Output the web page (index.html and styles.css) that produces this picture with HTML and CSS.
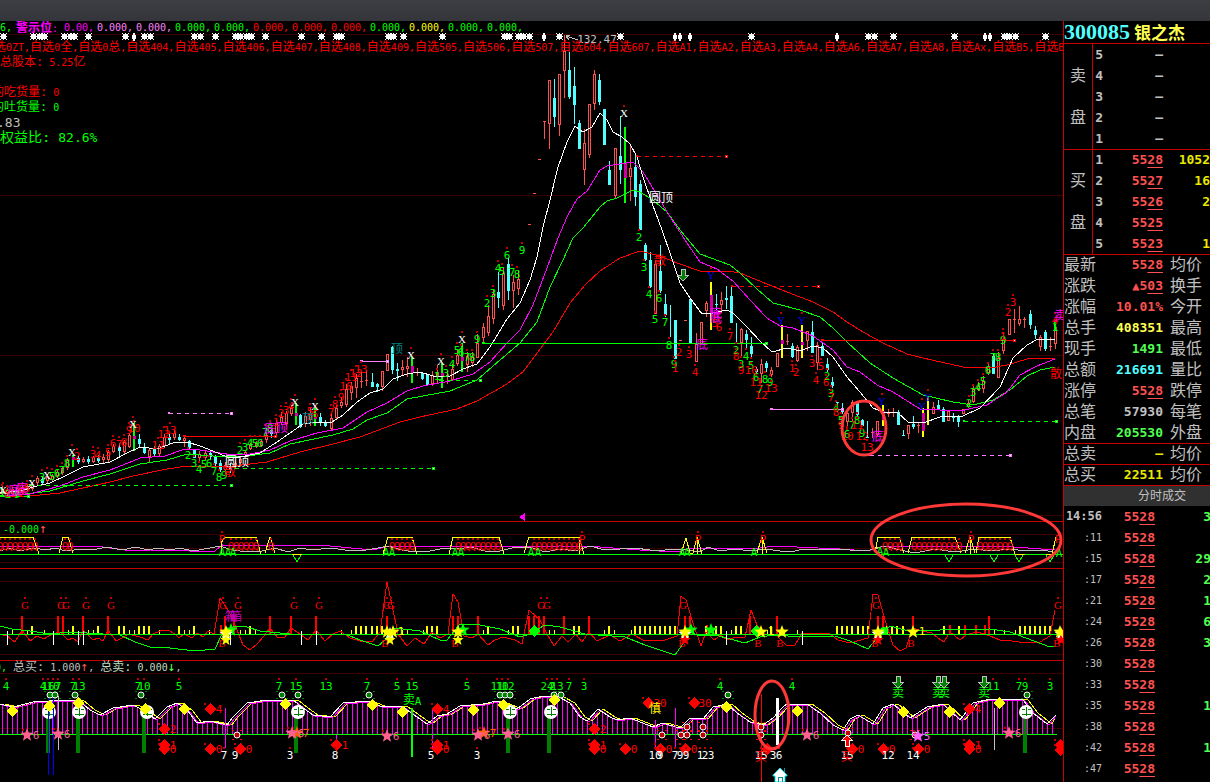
FILE: index.html
```html
<!DOCTYPE html>
<html lang="zh-CN">
<head>
  <meta charset="UTF-8" />
  <meta name="viewport" content="width=device-width, initial-scale=1.0"/>
  <title>300085 银之杰</title>
  <link rel="stylesheet" href="styles.css">
</head>
<body>
  <header class="topbar"></header>

  <main class="terminal">
    <section class="charts">
      <div class="pane">
        <svg id="kline" viewBox="0 21 1063 500"></svg>
        <div class="overlay">
          <p class="values">
            <b class="green lead">46,</b><b class="magenta name"><i>警示位</i>:</b><b class="magenta first">0.00,</b><b class="pink">0.000,</b><b class="pink">0.000,</b><b class="green">0.000,</b><b class="green">0.000,</b><b class="red">0.000,</b><b class="red">0.000,</b><b class="red">0.000,</b><b class="green">0.000,</b><b class="yellow">0.000,</b><b class="green">0.000,</b><b class="green">0.000,</b>
          </p>
          <p class="groups red" id="groups"></p>
          <ul class="facts">
            <li class="red"><i>总股本:</i> 5.25<i>亿</i></li>
            <li></li>
            <li class="red cut"><i>的吃货量:</i> 0</li>
            <li class="green cut"><i>的吐货量:</i> 0</li>
            <li class="gray big">.83</li>
            <li class="green big"><i>权益比:</i> 82.6%</li>
          </ul>
        </div>
      </div>

      <div class="pane">
        <svg id="signal" viewBox="0 521 1063 47"></svg>
        <div class="overlay">
          <p class="caption green">-0.000<span class="up">↑</span></p>
        </div>
      </div>

      <div class="pane">
        <svg id="power" viewBox="0 568 1063 92"></svg>
      </div>

      <div class="pane">
        <svg id="wave" viewBox="0 660 1063 122"></svg>
        <div class="overlay">
          <p class="caption totals gray"><span class="green">0,</span> <i>总买:</i> 1.000<span class="up">↑</span>, <span class="pale"><i>总卖:</i> 0.000</span><span class="down">↓</span>,</p>
        </div>
      </div>

      <svg class="notes" viewBox="0 21 1063 761">
        <ellipse cx="864" cy="428" rx="22" ry="27"/>
        <ellipse cx="966" cy="540" rx="95" ry="36"/>
        <ellipse cx="772" cy="715" rx="17" ry="34"/>
      </svg>
    </section>

    <aside class="quote">
      <h1><span class="code">300085</span><span class="stock">银之杰</span></h1>

      <div class="book">
        <div class="side"><span>卖</span><span>盘</span></div>
        <table>
          <tr><th>5</th><td class="gray">—</td><td></td></tr>
          <tr><th>4</th><td class="gray">—</td><td></td></tr>
          <tr><th>3</th><td class="gray">—</td><td></td></tr>
          <tr><th>2</th><td class="gray">—</td><td></td></tr>
          <tr><th>1</th><td class="gray">—</td><td></td></tr>
        </table>
      </div>
      <div class="book">
        <div class="side"><span>买</span><span>盘</span></div>
        <table>
          <tr><th>1</th><td class="rise">55<u>28</u></td><td class="gold">1052</td></tr>
          <tr><th>2</th><td class="rise">55<u>27</u></td><td class="gold">16</td></tr>
          <tr><th>3</th><td class="rise">55<u>26</u></td><td class="gold">2</td></tr>
          <tr><th>4</th><td class="rise">55<u>25</u></td><td class="gold"></td></tr>
          <tr><th>5</th><td class="rise">55<u>23</u></td><td class="gold">1</td></tr>
        </table>
      </div>

      <table class="info">
        <tr><th>最新</th><td class="rise">55<u>28</u></td><th>均价</th></tr>
        <tr><th>涨跌</th><td class="rise"><span class="tri">▲</span>5<u>03</u></td><th>换手</th></tr>
        <tr><th>涨幅</th><td class="rise">10.01%</td><th>今开</th></tr>
        <tr><th>总手</th><td class="lemon">408351</td><th>最高</th></tr>
        <tr><th>现手</th><td class="fall">1491</td><th>最低</th></tr>
        <tr><th>总额</th><td class="cyan">216691</td><th>量比</th></tr>
        <tr><th>涨停</th><td class="rise">55<u>28</u></td><th>跌停</th></tr>
        <tr><th>总笔</th><td class="gray">57930</td><th>每笔</th></tr>
        <tr><th>内盘</th><td class="fall">205530</td><th>外盘</th></tr>
        <tr class="ruled"><th>总卖</th><td class="gold">—</td><th>均价</th></tr>
        <tr class="ruled"><th>总买</th><td class="gold">22511</td><th>均价</th></tr>
      </table>

      <h2>分时成交</h2>
      <table class="ticks" id="ticks"></table>
    </aside>
  </main>

  <script src="chart.js"></script>
</body>
</html>
```
FILE: styles.css
```css
* { margin: 0; padding: 0; box-sizing: border-box; }
body {
  background: #000;
  color: #c0c0c0;
  font-family: "DejaVu Sans Mono", "Noto Sans CJK SC", monospace;
  overflow: hidden;
}
.topbar {
  height: 21px;
  background: linear-gradient(#3e3f43, #34353a);
}
.terminal { display: flex; }

/* colours */
.red { color: #f00; fill: #f00; }
.green { color: #0f0; fill: #0f0; }
.magenta { color: #f0f; fill: #f0f; }
.pink { color: #ff80ff; fill: #ff80ff; }
.yellow { color: #ff0; fill: #ff0; }
.gray { color: #c0c0c0; fill: #c0c0c0; }
.white { fill: #fff; }
.blue { fill: #00f; }
.teal { fill: #008080; }
.purple { fill: #c000c0; }
.orange { fill: #ff6000; }
.rose { fill: #ff6090; }
.violet { fill: #ff60ff; }
.pale { color: #c0dcc0; }
.rise { color: #ff5050; }
.fall { color: #50ff50; }
.gold { color: #e8e800; }
.lemon { color: #ffff50; }
.cyan { color: #50ffff; }

/* charts */
.charts {
  position: relative;
  flex: 1;
  min-width: 0;
  overflow: hidden;
}
.pane { display: grid; grid-template-columns: minmax(0, 1fr); }
.pane > * { grid-area: 1 / 1; }
.charts svg { display: block; width: 100%; }
.pane svg { shape-rendering: crispEdges; overflow: hidden; }
.pane svg circle, .pane svg .soft { shape-rendering: auto; }
.pane svg text {
  font-family: "DejaVu Sans Mono", "Noto Sans CJK SC", monospace;
  font-size: 11px;
  text-anchor: middle;
}
.pane svg text.cjk { font-size: 12px; }
.pane svg text.serif { font-family: "Liberation Serif", serif; font-size: 11px; }
.notes {
  position: absolute;
  top: 0;
  left: 0;
  pointer-events: none;
  fill: none;
  stroke: #ff3838;
  stroke-width: 3;
}
.overlay {
  font-size: 10px;
  line-height: 12px;
  white-space: nowrap;
  overflow: hidden;
}
.overlay i { font-style: normal; font-size: 12px; }
.overlay b { font-weight: normal; }
.values { display: flex; margin-left: -6px; padding-top: 1px; height: 20px; }
.values b { flex: none; width: 39px; }
.values .lead { width: 22px; }
.values .name { width: 48px; }
.values .name i { font-weight: bold; }
.values .first { width: 33px; }
.groups { height: 14px; margin-left: -18px; }
.facts { list-style: none; }
.facts li { height: 15px; line-height: 15px; }
.facts .cut { margin-left: -8px; }
.facts .big { font-size: 13px; }
.facts .big i { font-size: 14px; }
.facts .gray { margin-left: -3px; }
.caption { padding: 2px 3px; }
.totals { padding: 1px 0; margin-left: -5px; }
.up, .down { font-size: 13px; line-height: 12px; }
.up { color: #ff5050; }
.down { color: #50ff50; }

.ln { fill: none; stroke-width: 1; }
.ln.red { stroke: #f00; fill: none; }
.ln.green { stroke: #0f0; fill: none; }
.ln.magenta { stroke: #f0f; fill: none; }
.ln.yellow { stroke: #ff0; fill: none; }
.ln.white { stroke: #fff; fill: none; }
.ln.gray { stroke: #c0c0c0; fill: none; }
.ln.pink { stroke: #ff80ff; fill: none; }
.dash { stroke-dasharray: 4 4; }
.grid { fill: #3c0000; }
.rule { fill: #c80000; }
.dot { fill: #c00000; }
.up-wick { fill: #ff5050; }
.dn { fill: #50ffff; }
.mid { fill: #d000a0; }
.pillar { fill: #008000; }

/* quote panel */
.quote {
  flex: none;
  width: 147px;
  overflow: hidden;
  border-left: 1px solid #c80000;
  font-size: 13px;
}
.quote h1 {
  display: flex;
  align-items: center;
  gap: 4px;
  height: 23px;
  border-bottom: 1px solid #c80000;
}
.code {
  font: bold 22px/22px "Liberation Serif", serif;
  color: #50ffff;
}
.stock {
  font: bold 17px/22px "Noto Sans CJK SC", sans-serif;
  color: #ffff50;
}
.quote table {
  border-collapse: collapse;
  table-layout: fixed;
  width: 147px;
}
.quote tr { height: 21px; }
.quote td, .quote th { line-height: 19px; white-space: nowrap; }
.quote td { text-align: right; font-weight: bold; }
.quote u { text-underline-offset: 3px; text-decoration-thickness: 1px; }
.book {
  display: flex;
  margin-bottom: -1px;
  border-bottom: 1px solid #c80000;
}
.side {
  display: flex;
  flex-direction: column;
  flex: none;
  justify-content: center;
  gap: 21px;
  width: 29px;
  border-right: 1px solid #c80000;
  font-size: 16px;
  line-height: 21px;
  text-align: center;
}
.quote .book table { width: 118px; }
.book th { width: 10px; text-align: right; }
.book td:nth-child(2) { width: 60px; }
.info th {
  font-size: 16px;
  font-weight: normal;
  text-align: left;
  width: 32px;
}
.info td { width: 67px; }
.info th:last-child { width: 48px; padding-left: 7px; }
.info .ruled > * { box-shadow: inset 0 1px #c80000; }
.tri { font-size: 12px; }
.quote h2 {
  height: 21px;
  padding-left: 74px;
  border-top: 1px solid #c80000;
  background: #303030;
  font-size: 12px;
  font-weight: normal;
  line-height: 20px;
}
.ticks th { width: 38px; font-size: 10px; font-weight: normal; text-align: right; }
.ticks tr:first-child th { font-size: 12px; font-weight: bold; }
.ticks td { width: 53px; }
.ticks td:last-child { width: 56px; }
```
FILE: chart.js
```js
const NS = "http://www.w3.org/2000/svg";

function el(svg, tag, attrs, text) {
  const node = document.createElementNS(NS, tag);
  for (const k in attrs) node.setAttribute(k, attrs[k]);
  if (text !== undefined) node.textContent = text;
  svg.appendChild(node);
  return node;
}
const box = (s, x, y, w, h, c) => el(s, "rect", { x, y, width: w, height: h, class: c });
const line = (s, pts, c) => el(s, "polyline", { points: pts, class: "ln " + c });
// centred label, with the small mark above it
function label(s, x, y, text, c, dot) {
  if (dot) box(s, x - 1, y - 8, 2, 2, "dot");
  el(s, "text", { x, y: y + 4, class: c }, text);
}
function labels(s, c, dot, data) {
  data.trim().split(/\s+/).forEach(item => {
    const [x, y, t] = item.split(",");
    label(s, +x, +y, t, c, dot);
  });
}
function grid(s, rows) {
  rows.forEach(y => box(s, 0, y, 1063, 1, "grid"));
}
const diamond = (s, x, y, c) => el(s, "path", { d: `M${x} ${y - 6}l6 6l-6 6l-6-6z`, class: c });
function star(s, x, y, r, c) {
  let d = "";
  for (let i = 0; i < 10; i++) {
    const a = Math.PI * i / 5 - Math.PI / 2;
    const q = i % 2 ? r * 0.42 : r;
    d += (i ? "L" : "M") + (x + q * Math.cos(a)).toFixed(1) + " " + (y + q * Math.sin(a)).toFixed(1);
  }
  el(s, "path", { d: d + "z", class: c + " soft" });
}
function downArrow(s, x, y) {
  el(s, "path", { d: `M${x - 2} ${y}h4v6h4l-6 6l-6-6h4z`, fill: "#008000", stroke: "#c0c0c0" });
}
function upArrow(s, x, y) {
  el(s, "path", { d: `M${x} ${y}l5 5h-3v6h-4v-6h-3z`, fill: "#f00", stroke: "#fff" });
}

/* ---------- group names ---------- */
const groups = ["0ZT", "0全", "0总", "404", "405", "406", "407", "408", "409", "505", "506", "507", "604", "607",
  "A1", "A2", "A3", "A4", "A6", "A7", "A8", "Ax", "B5", "B6"];
document.getElementById("groups").innerHTML = groups
  .map(g => "<i>自选</i>" + g.replace(/[全总]/, "<i>$&</i>") + ",").join("");

/* ---------- main chart ---------- */
const k = document.getElementById("kline");
grid(k, [34, 195, 355, 515]);

// x, high, low, body top, body bottom
const rising = `2,486,496,489,494 7,487,496,490,494 12,487,496,489,494 17,486,495,488,493 22,485,494,487,492 27,484,492,486,490
32,482,491,484,489 37,476,485,478,483 47,474,484,477,481 52,474,482,476,480 57,470,478,472,476 62,466,475,468,473 67,458,470,460,468 83,457,463,459,462 93,456,463,457,462
103,454,463,457,460 108,450,462,452,460 113,444,453,446,452 124,440,454,442,452 129,433,448,435,447 149,448,462,450,457 159,444,456,446,454
164,434,448,437,446 174,430,440,433,438 184,436,447,438,441 199,451,463,454,458 205,450,460,453,458 225,462,474,465,470 235,460,468,463,467 240,457,464,459,463
245,450,456,452,455 250,443,450,445,449 256,441,448,443,447 261,439,447,441,446 266,432,443,435,440 276,420,435,423,433 281,412,425,417,423
286,411,426,413,424 291,405,416,408,414 305,412,427,416,424 310,408,426,414,420 331,414,430,418,429 336,405,420,408,418
341,398,408,402,406 346,384,407,389,405 351,382,400,386,393 356,374,398,378,388 361,372,388,381,383 366,370,386,380,381 382,371,391,371,387
387,354,371,354,371 402,360,375,367,370 407,357,377,366,369 417,368,376,372,373 432,371,386,375,384 437,365,383,372,377 447,371,384,375,377
452,364,380,369,380 457,350,366,355,364 467,352,372,356,365 472,352,367,357,363 477,334,358,343,358 483,323,343,327,338 488,305,336,316,333
493,290,324,294,319 503,268,310,273,306 513,275,308,282,291 518,270,295,279,289 544,121,139,121,122 549,80,149,80,124 559,74,136,74,125
564,35,98,51,71 584,129,185,143,170 589,104,158,104,155 594,70,110,74,104 615,148,199,148,196 630,146,201,168,177 655,260,314,264,314
696,333,362,344,362 701,322,344,322,344 706,301,317,303,311 721,292,313,300,305 741,328,358,329,343 761,359,383,364,374 771,367,377,370,375
777,353,367,353,367 787,334,345,341,343 797,345,362,347,361 807,331,351,331,341 817,342,370,345,363 847,408,428,413,422 852,400,422,402,413
872,428,438,432,434 877,421,437,421,435 888,409,417,413,414 893,408,417,412,413 908,425,439,425,434 918,423,433,425,427 933,402,414,407,414
948,411,421,411,421 963,409,414,409,414 968,400,408,403,407 973,386,403,389,402 978,382,391,386,390 983,376,393,381,389 988,362,375,367,373
998,352,378,358,378 1003,333,354,340,351 1009,319,335,319,335 1014,309,333,319,320 1019,306,326,319,324 1024,317,328,319,320
1040,335,351,337,347 1050,337,351,346,347 1055,325,349,327,344`;
const falling = `42,477,485,479,483 78,456,464,458,462 88,456,464,459,462 98,455,463,458,461 119,443,456,447,451 139,434,448,439,444 144,443,454,448,453 154,446,456,449,454
169,434,444,437,440 179,434,441,437,440 189,440,450,441,448 194,449,458,449,458 210,450,460,453,457 215,455,466,456,464 220,460,472,463,470
230,463,473,467,470 271,428,438,430,434 300,414,428,415,427 320,413,426,417,422 325,420,427,422,426 372,373,387,382,387 377,383,392,384,387
392,346,374,347,370 397,363,381,369,371 422,372,380,373,379 427,374,386,375,385 498,272,308,292,298 508,258,300,264,291 554,79,127,98,117
569,52,99,70,97 574,67,124,86,105 579,120,149,123,149 599,74,105,80,102 604,109,145,109,145 609,161,185,170,185 620,116,184,156,170
635,155,206,167,197 640,180,230,184,230 645,243,261,245,260 650,252,288,260,287 660,245,293,271,291 665,294,317,304,315 670,305,337,305,305
675,320,359,320,359 690,299,343,299,343 716,294,310,304,305 726,286,309,298,300 731,285,323,296,323 736,323,344,343,344 746,330,349,334,340
751,337,357,346,354 756,367,374,369,372 766,361,372,363,368 792,343,358,346,357 812,321,353,332,353 822,342,356,346,356 827,358,372,364,370
832,377,388,382,386 837,402,404,402,403 842,403,414,408,412 857,402,416,403,415 862,419,427,420,426 867,421,438,437,438 898,410,425,412,425
903,430,436,435,436 913,416,429,424,427 938,400,410,405,409 943,407,422,409,422 953,413,422,416,418 958,415,427,417,422 993,354,374,356,374
1030,310,329,314,325 1035,326,339,330,335 1045,330,351,332,349`;
const rows = s => s.trim().split(/\s+/).map(r => r.split(",").map(Number));

rows(rising).forEach(([x, hi, lo, a, b]) => {
  box(k, x, hi, 1, lo - hi, "up-wick");
  if (b - a < 3) box(k, x - 1, a, 3, 1, "up-wick");
  else {
    box(k, x - 1, a, 3, b - a, "up-wick");
    el(k, "rect", { x, y: a + 1, width: 1, height: b - a - 2, fill: "#000" });
  }
});
rows(falling).forEach(([x, hi, lo, a, b]) => {
  box(k, x, hi, 1, lo - hi, "dn");
  box(k, x - 1, a, 3, b - a, "dn");
});
[[538, 159], [533, 193], [528, 224], [679, 340], [684, 320]].forEach(([x, y]) => box(k, x, y, 3, 1, "up-wick"));

// highlighted bars: x, top, bottom, inner top, inner bottom
const marked = (c, list) => list.forEach(([x, a, b, m, n]) => {
  box(k, x - 1, a, 2, b - a, c);
  if (n) box(k, x - 1, m, 3, n - m, "mid");
});
marked("green", [[73, 455, 467, 457, 460], [134, 423, 451, 436, 439], [296, 403, 425, 413, 416], [315, 408, 426, 417, 419],
  [412, 357, 383, 366, 373], [442, 363, 388, 373, 377], [462, 343, 372, 357, 361], [625, 127, 203, 163, 178], [1055, 322, 330]]);
marked("yellow", [[711, 282, 330, 295, 314], [782, 325, 358, 340, 344], [802, 325, 358, 342, 345],
  [883, 405, 426, 411, 420], [923, 408, 437, 413, 431], [928, 397, 425]]);

line(k, "0,497 30,496 60,493 83,488 110,482 133,476 167,469 187,466 233,466 267,462 300,452 333,444 360,437 400,422 420,417 457,409 477,401 507,384 523,372 553,332 570,303 585,285 600,271 620,258 640,251 660,256 677,263 700,271 727,271 740,273 767,284 787,292 813,302 833,312 847,322 863,332 883,343 907,354 923,358 963,367 990,368 1007,365 1027,359 1043,358 1055,359", "red");
line(k, "0,497 50,491 83,481 110,474 140,464 167,460 187,454 213,456 240,457 270,453 290,444 333,435 353,429 367,420 387,413 407,399 450,391 477,380 500,360 520,343 537,322 550,287 563,260 573,238 583,228 600,207 607,201 617,198 633,190 640,192 653,200 667,212 680,230 700,254 730,265 740,273 757,289 773,303 800,310 820,317 833,328 847,342 870,363 893,378 923,395 953,402 973,405 993,400 1010,390 1027,376 1040,370 1055,367", "green");
line(k, "0,496 30,494 60,486 83,477 110,470 133,461 140,458 165,456 185,449 200,450 220,453 233,455 250,454 270,450 290,441 317,433 343,428 367,412 387,403 407,391 423,386 450,381 473,374 490,362 507,343 520,330 533,305 547,268 558,238 567,217 577,199 587,191 600,170 607,166 620,164 633,162 643,172 657,195 672,220 687,243 700,262 717,269 733,281 750,300 767,318 780,326 793,328 813,336 833,350 847,367 860,372 877,385 893,392 920,409 960,411 987,405 1007,392 1020,375 1037,366 1055,359", "magenta");
line(k, "0,493 20,491 33,487 50,483 67,475 83,467 110,462 127,453 140,447 157,449 173,443 187,442 200,446 213,451 227,457 240,457 260,453 277,442 290,433 303,424 317,422 332,422 343,415 357,402 370,393 383,389 393,379 407,374 420,372 433,376 450,376 463,369 477,364 490,347 507,319 520,303 530,280 537,257 543,227 550,200 558,167 567,142 575,126 583,132 592,127 600,113 607,120 613,132 622,137 630,144 637,157 643,177 652,203 662,230 671,256 680,283 690,298 702,314 713,313 727,310 733,313 747,327 760,341 772,352 787,348 800,351 813,346 823,348 833,357 847,377 860,392 873,408 883,412 898,413 908,422 923,423 940,417 963,416 980,408 1000,387 1013,358 1027,345 1038,339 1055,339", "white");

// price levels: x1, x2, y, colour, dashed
[[637, 726, 156, "red", 1], [732, 818, 286, "red", 1], [483, 766, 343, "green"], [361, 387, 361, "pink"], [169, 231, 413, "pink", 1],
  [184, 275, 436, "red"], [30, 231, 485, "green", 1], [235, 433, 468, "green", 1], [440, 480, 380, "green", 1], [771, 842, 409, "pink"],
  [822, 1014, 340, "red"], [964, 1056, 421, "green", 1], [870, 1010, 455, "pink", 1], [0, 28, 496, "green", 1]
].forEach(([a, b, y, c, d]) => {
  line(k, `${a},${y} ${b},${y}`, c + (d ? " dash" : ""));
  box(k, a - 1, y - 1, d ? 2 : 3, 2, c);
  box(k, b - 1, y - 1, 3, 3, c);
  box(k, b, y, 1, 1, "white");
});

// sparks under the value row
[3, 33, 39, 44, 64, 70, 74, 88, 125, 134, 144, 150, 194, 200, 215, 235, 240, 246, 251, 265, 301, 321, 336, 341, 388, 393, 403, 442, 504,
  509, 518, 523, 529, 544, 559, 620, 675, 680, 690, 751, 837, 868, 874, 893, 954, 985, 990, 1004, 1009, 1015, 1045
].forEach(x => {
  const thin = [134, 544, 675, 680, 690, 837, 985, 990].includes(x);
  el(k, "path", {
    d: thin ? `M${x - 1} 33h2v2h1v4h-1v2h-2v-2h-1v-4h1z`
      : `M${x - 2} 34h5v5h-5zM${x - 3} 33h1v1h-1zM${x + 3} 33h1v1h-1zM${x} 33h1v7h-1zM${x - 3} 36h7v1h-7zM${x - 3} 39h1v1h-1zM${x + 3} 39h1v1h-1z`,
    class: "white", "fill-rule": "nonzero"
  });
});

labels(k, "green", true, "639,237,2 644,267,3 649,294,4 655,319,5 659,298,6 665,322,7 669,345,8 674,364,9 507,255,6 522,250,9 498,268,4 502,271,5 512,272,7 517,274,8 487,303,2 493,293,3 477,339,9 457,350,5 461,352,6 467,357,7 472,357,8 452,364,4 446,373,3 437,376,1 736,350,2 741,364,3 746,356,4 751,365,5 756,377,6 760,389,7 765,379,8 770,382,9 827,376,2 831,393,3 836,408,4 841,420,5 847,434,6 852,425,7 857,420,8 862,433,9 969,403,2 973,392,3 978,387,4 983,381,5 988,370,6 993,357,7 998,357,8 1003,340,9 1055,327,1 188,455,2 194,463,3 199,469,4 204,464,5 209,463,6 214,471,7 219,477,8 224,475,9 240,450,2 245,447,3 250,443,4 255,443,5 260,443,6 265,432,7 270,428,8 2,492,1 8,494,2 42,477,3 52,476,5 57,473,6 62,470,7 67,463,8 17,494,9");
labels(k, "red", true, "675,368,1 679,352,2 689,354,3 695,372,4 715,323,5 719,327,6 730,336,7 736,356,8 741,370,9 751,370,10 756,382,11 761,395,12 771,388,13 792,368,1 796,372,2 812,363,3 816,380,4 821,366,5 826,382,6 831,397,7 836,412,8 841,425,9 847,436,10 857,425,11 862,436,12 867,447,13 1003,336,1 1008,312,2 1013,302,3 1055,320,4 77,456,2 93,454,3 98,455,4 108,452,5 113,443,6 119,444,7 124,442,8 129,430,9 134,428,10 158,445,11 164,434,12 170,430,13 276,422,1 281,413,2 286,410,3 291,406,4 331,412,7 335,404,8 341,397,9 346,386,10 351,377,11 356,373,12 361,369,13 310,411,5 315,414,6 12,493,1 22,491,4 27,488,5 7,493,8 19,492,1");
labels(k, "serif white", true, "624,113,X 3,490,X 32,483,X 47,475,X 72,452,X 133,424,X 295,402,X 315,406,X 411,355,X 441,361,X 462,339,X");
labels(k, "serif blue", true, "711,275,Y 781,320,Y 802,320,Y 882,401,Y 922,406,Y 928,397,Y");
labels(k, "cjk white", false, "661,198,圆顶 237,462,圆顶");
labels(k, "cjk magenta", false, "702,345,底 716,314,底 716,318,底 878,437,底 1060,316,卖 282,428,顶 270,429,底 14,491,底 22,489,底");
labels(k, "cjk red", false, "660,261,散 1056,374,散 230,472,散");
labels(k, "cjk teal", false, "397,349,顶 308,419,顶");
el(k, "path", { d: "M566 36l12 4M566 36l4-1M566 36l3 4", stroke: "#c0c0c0" });
label(k, 597, 39, "132.47", "gray");
downArrow(k, 683, 269);
el(k, "path", { d: "M519 517l6-4v8z", class: "magenta" });

/* ---------- signal pane ---------- */
const s = document.getElementById("signal");
box(s, 0, 521, 1063, 1, "rule");
grid(s, [534, 548, 562]);
line(s, "0,546 96,546 125,550 150,550 190,551 215,551 222,545 330,546 372,550 386,547 410,546 440,547 460,546 500,547 560,546 600,547 640,550 678,552 690,548 760,548 775,546 840,549 868,551 880,547 905,546 1000,546 1055,550", "magenta");
line(s, "0,551 10,548 20,551 33,548 46,550 55,548 66,551 82,549 92,550 107,547 122,550 136,547 148,550 158,548 170,550 180,548 193,551 210,548 220,546 232,550 248,552 262,551 275,548 288,552 300,548 312,550 330,548 345,550 360,551 378,548 388,546 402,550 415,552 430,551 445,548 458,549 470,547 485,551 500,551 512,548 530,547 545,552 560,549 575,551 590,546 605,550 620,549 635,548 650,550 665,550 680,549 700,552 708,547 720,551 735,549 750,551 765,549 780,551 792,552 802,549 830,549 850,550 870,550 885,546 900,550 915,553 935,549 955,552 975,549 990,551 1010,549 1025,551 1045,550 1055,553", "gray");
box(s, 0, 554, 1063, 1, "green");
["0,537 33,537 39,554", "59,553 63,537 68,537 73,553", "221,554 221,543 225,537 256,537 261,554", "265,553 270,537 275,553", "383,554 388,537 412,537 417,554",
  "449,554 453,537 499,537 504,554", "524,553 529,537 579,537 584,554", "579,537 579,554", "681,554 686,538 690,553 693,553 697,537 702,554", "697,537 697,554",
  "757,553 762,537 767,553", "762,537 762,554", "875,553 878,537 899,537 904,553", "908,553 912,537 955,537 961,553", "965,553 970,537 975,553", "970,537 970,554",
  "976,553 979,537 1010,537 1015,554", "292,554 302,554", "1015,554 1025,554", "1046,554 1052,554 1056,537"
].forEach(p => line(s, p, "yellow"));
[[0, 36], [65, 72], [231, 258], [271, 274], [392, 416], [458, 501], [534, 580], [885, 902], [914, 960], [980, 1014]].forEach(([a, b]) => {
  for (let x = a; x <= b; x += 5) label(s, x, 546, "Q", "red", true);
});
labels(s, "red", true, "222,539,P 582,539,P 698,539,P 763,539,P 971,539,P 1058,539,P");
["222,552", "228,552", "233,552", "386,552", "392,552", "455,552", "461,552", "531,552", "538,552", "682,552", "687,552", "754,552", "880,551", "886,552", "1059,553"]
  .forEach(p => labels(s, "green", false, p + ",A"));
[297, 949, 994, 1019, 1050].forEach(x => line(s, `${x - 4},555 ${x},562 ${x + 4},555`, "green"));

/* ---------- power pane ---------- */
const p = document.getElementById("power");
box(p, 0, 568, 1063, 1, "rule");
grid(p, [581, 618, 654]);
[22, 58, 63, 83, 108, 225, 234, 270, 291, 316, 387, 453, 458, 478, 529, 534, 539, 544, 564, 589, 685, 690, 750, 777, 878, 883, 913, 989]
  .forEach(x => box(p, x - 1, 616, 2, 18, "red"));
[220, 706, 949, 964, 975, 984].forEach(x => box(p, x, 625, 2, 9, "red"));
[32, 73, 98, 119, 124, 139, 144, 149, 179, 194, 250, 356, 361, 366, 372, 377, 382, 427, 432, 437, 488, 513, 518, 574, 579, 609, 635,
  640, 645, 650, 655, 660, 665, 670, 675, 706, 716, 721, 736, 741, 771, 837, 842, 847, 852, 858, 863, 868, 887, 892, 897, 903, 944, 959,
  1020, 1025, 1030, 1035, 1040, 1045, 1050].forEach(x => box(p, x - 1, 626, 2, 8, "yellow"));
[12, 27, 44, 68, 88, 93, 129, 134, 159, 184, 189, 209, 240, 245, 255, 341, 351, 397, 402, 407, 423, 483, 508, 549, 554, 604, 614, 631, 731, 767, 797, 922, 994, 1004, 1015]
  .forEach(x => box(p, x, 630, 1, 4, "yellow"));
line(p, "0,634 7,636 15,642 22,630 30,641 37,636 44,639 52,634 60,632 68,640 73,638 78,642 83,630 93,640 98,638 103,641 108,630 116,641 122,638 128,634 140,637 148,640 153,634 160,631 168,630 175,634 179,638 184,634 192,638 197,633 203,637 208,631 214,634 220,598 228,610 235,625 243,645 250,650 258,643 264,636 270,628 278,638 285,637 291,628 300,634 308,640 316,630 325,641 333,634 340,631 350,638 360,641 372,642 380,632 387,582 392,605 398,634 407,646 415,638 424,644 432,632 440,638 448,634 453,594 458,602 464,636 472,638 478,634 488,645 495,640 503,637 515,640 522,644 529,610 540,620 547,634 554,646 562,636 568,642 576,634 582,642 589,632 597,641 610,635 620,641 632,634 645,641 665,640 677,636 681,596 686,600 692,620 701,646 706,632 714,640 721,635 727,640 733,638 745,637 751,610 757,625 765,634 775,634 787,646 795,645 802,633 830,634 838,640 850,643 868,638 873,594 878,595 885,620 893,645 900,651 906,648 913,628 922,631 932,633 938,638 944,642 950,632 960,640 966,635 976,632 985,634 1000,640 1012,641 1025,643 1040,642 1050,636 1055,610", "red");
line(p, "0,626 12,629 30,631 50,634 70,632 120,635 135,642 150,647 170,648 195,651 215,649 222,634 235,626 247,627 260,631 290,634 345,634 360,640 378,646 385,640 390,630 395,628 420,631 440,640 447,640 460,624 480,625 500,629 520,637 530,634 545,625 560,627 585,634 625,637 645,645 660,650 675,655 682,645 690,632 700,636 715,635 745,643 760,637 775,635 800,637 835,636 850,641 868,649 880,634 890,626 905,630 940,630 990,629 1010,632 1050,647 1055,646", "green");
box(p, 0, 634, 1063, 1, "green");
[7, 53, 78, 83, 230, 301, 316, 726, 802].forEach(x => box(p, x, 631, 1, 14, "white"));
labels(p, "serif red", true, "25,605,G 61,605,G 66,605,G 86,605,G 111,605,G 223,605,G 238,605,G 294,605,G 319,605,G 387,605,G 391,605,G 541,605,G 547,605,G 683,605,G 876,605,G 1058,605,G");
labels(p, "serif red", false, "222,643,B 385,643,B 455,643,B 682,643,B 758,643,B 780,643,B 875,643,B 911,643,B 1057,643,B");
labels(p, "cjk purple", false, "231,617,箱 236,617,箱");
[[231, 630], [463, 630], [691, 630], [711, 630]].forEach(([x, y]) => star(p, x, y, 7, "green"));
diamond(p, 534, 631, "green");
diamond(p, 756, 631, "green");
el(p, "circle", { cx: 884, cy: 631, r: 4, class: "green" });
[226, 390, 685, 878, 1061].forEach(x => { star(p, x, 634, 7, "white"); star(p, x, 640, 6, x > 390 ? "red" : "yellow"); });
star(p, 458, 640, 6, "yellow");
[226, 387, 393, 458, 685, 761, 782, 878, 913, 1060].forEach(x => star(p, x, 632, 7, "yellow"));
labels(p, "yellow", false, "401,631,1 771,631,1 922,631,1");

/* ---------- wave pane ---------- */
const w = document.getElementById("wave");
box(w, 0, 660, 1063, 1, "rule");
grid(w, [673, 728]);
const curve = rows("0,704 13,707 33,702 67,700 78,700 90,710 100,715 113,708 133,705 143,710 155,719 167,707 177,703 187,710 197,723 210,721 227,725 233,717 247,703 267,700 293,700 303,708 313,715 330,717 343,703 367,701 380,706 390,706 403,707 417,717 427,724 437,716 447,714 460,706 483,704 497,701 507,705 517,709 530,699 543,696 557,696 570,703 580,717 587,721 598,709 610,717 617,720 630,718 653,727 662,723 680,728 690,718 703,719 713,707 727,704 737,713 750,722 763,725 773,718 783,707 787,704 807,704 820,713 833,725 843,730 850,719 858,715 873,724 883,708 893,704 910,718 927,707 943,704 960,720 973,703 990,699 1023,700 1033,713 1047,724 1056,715");
function at(x) {
  for (let i = 1; i < curve.length; i++) {
    const [x0, y0] = curve[i - 1], [x1, y1] = curve[i];
    if (x <= x1) return Math.round(y0 + (y1 - y0) * (x - x0) / (x1 - x0));
  }
  return 715;
}
for (let x = 2; x < 1057; x += 5) box(w, x, at(Math.max(0, x - 2)) + 1, 1, 733 - at(Math.max(0, x - 2)), "magenta");
const shift = (n, m) => curve.map(([x, y]) => Math.min(x + n, 1056) + "," + (y + m)).join(" ");
line(w, shift(5, 0), "yellow");
line(w, shift(2, 1), "magenta");
line(w, shift(0, 0), "white");
box(w, 0, 734, 1057, 1, "green");

[48, 78, 144, 296, 508, 549, 1025].forEach(x => box(w, x - 2, 714, 4, 39, "pillar"));
[[225, 708, 748], [432, 708, 750], [336, 735, 742], [655, 720, 748], [675, 708, 748]].forEach(([x, a, b]) => box(w, x, a, 1, b - a, "magenta"));
[[58, 696, 750], [994, 708, 750]].forEach(([x, a, b]) => box(w, x, a, 1, b - a, "gray"));
[49, 79, 147, 298, 510, 551, 1026].forEach(x => {
  el(w, "circle", { cx: x, cy: 712, r: 7, class: "white" });
  el(w, "path", { d: `M${x - 4} 709h3M${x + 2} 709h3M${x - 4} 714h9M${x} 707v9`, stroke: "#008000" });
});
box(w, 48, 697, 1, 78, "blue");
box(w, 53, 697, 1, 78, "blue");
box(w, 411, 708, 2, 49, "green");
box(w, 776, 698, 3, 47, "white");
box(w, 761, 694, 1, 88, "red");

[[50, 695], [55, 695], [75, 695], [141, 695], [282, 695], [298, 695], [369, 695], [500, 695], [505, 695], [510, 695], [554, 695], [561, 695], [728, 695], [1027, 695]].forEach(([x, y]) => {
  el(w, "path", { d: `M${x - 6} ${y - 4}l2 1M${x + 6} ${y - 4}l-2 1M${x - 6} ${y + 4}l2-1M${x + 6} ${y + 4}l-2-1`, stroke: "#008000" });
  el(w, "circle", { cx: x, cy: y, r: 3, fill: "#008000", stroke: "#fff" });
});
[[237, 735], [662, 735], [681, 735], [687, 727], [687, 735], [703, 727], [703, 735], [761, 727], [761, 735], [848, 733], [915, 735]].forEach(([x, y]) => {
  el(w, "path", { d: `M${x - 5} ${y + 5}l2-1M${x + 5} ${y + 5}l-2-1M${x - 5} ${y - 5}l2 1M${x + 5} ${y - 5}l-2 1`, stroke: "#f00" });
  el(w, "circle", { cx: x, cy: y, r: 3, fill: "#c00000", stroke: "#fff" });
});

[[12, 711], [49, 706], [78, 703], [145, 709], [184, 709], [285, 704], [372, 705], [402, 712], [473, 710], [503, 705], [554, 700], [726, 707], [797, 711], [903, 712], [949, 712], [999, 703]]
  .forEach(([x, y]) => diamond(w, x, y, "yellow"));
[[164, 729, 2], [164, 745, 1], [164, 749, 0], [210, 709, 4], [210, 749, 0], [240, 749, 0], [336, 745, 1], [437, 709, 4], [437, 745, 1], [437, 749, 0],
  [594, 729, 2], [594, 745, 1], [594, 749, 0], [625, 749, 0], [648, 703, ""], [694, 703, ""], [660, 749, 0], [685, 749, 0], [767, 749, ""], [852, 749, 0], [883, 749, 0],
  [918, 749, 0], [969, 709, 4], [969, 745, 1], [969, 749, 0], [1060, 745, ""], [1060, 750, ""]
].forEach(([x, y, t]) => {
  box(w, x - 6, y - 6, 2, 2, "dot");
  diamond(w, x, y, "red");
  if (t !== "") label(w, x + 9, y, t, "red");
});
labels(w, "red", false, "660,703,30 705,703,30");
[[27, 735, "6", "rose"], [58, 734, "6", "rose"], [387, 736, "6", "rose"], [508, 734, "6", "rose"], [807, 735, "6", "rose"], [1009, 733, "6", "rose"],
  [918, 736, "5", "violet"], [297, 733, "7", "orange"], [292, 733, "6", "rose"], [484, 733, "7", "orange"], [478, 735, "6", "rose"]
].forEach(([x, y, t, c]) => {
  box(w, x - 5, y - 6, 2, 2, "dot");
  star(w, x, y, 7, c);
  label(w, x + 9, y, t, c);
});

labels(w, "green", true, "6,686,4 43,686,4 48,686,16 53,686,10 58,686,7 73,686,7 79,686,13 138,686,7 144,686,10 179,686,5 279,686,7 296,686,15 326,686,13 367,686,7 397,686,5 412,686,15 467,686,5 497,686,11 502,686,10 508,686,12 547,686,24 552,686,2 557,686,13 569,686,7 584,686,3 720,686,4 792,686,4 993,686,11 1019,686,7 1025,686,9 1050,686,3");
labels(w, "white", true, "224,755,7 235,755,9 290,755,3 335,755,8 431,755,5 477,755,3 655,755,10 660,755,9 675,755,7 680,755,9 686,755,9 700,755,1 705,755,2 711,755,3 761,755,15 773,755,3 779,755,6 847,755,15 888,755,12 913,755,14");
labels(w, "cjk green", false, "898,693,卖 938,693,卖 944,693,卖 984,693,卖 409,700,卖");
label(w, 418, 701, "A", "green");
label(w, 655, 709, "慎", "cjk yellow");
labels(w, "cjk red", false, "761,757,买 847,757,买");
[898, 938, 944, 984].forEach(x => downArrow(w, x, 676));
upArrow(w, 847, 735);

// home mark
el(w, "path", { d: "M773 775l7-7l7 7v1h-2v6h-10v-6h-2z", fill: "#fff", stroke: "#00e0f0", class: "soft" });
el(w, "path", { d: "M778 782v-5h4v5M784 768v4", fill: "none", stroke: "#0090a0" });

/* ---------- trades ---------- */
const ticks = [["14:56", 3], [":11", ""], [":15", 29], [":17", 2], [":21", 1], [":24", 6], [":26", 3], [":30", ""], [":33", ""], [":35", 1], [":38", ""], [":42", 1], [":47", ""]];
document.getElementById("ticks").innerHTML = ticks.map(([t, n]) =>
  `<tr><th>${t}</th><td class="rise">55<u>28</u></td><td class="fall">${n}</td></tr>`).join("");
```
